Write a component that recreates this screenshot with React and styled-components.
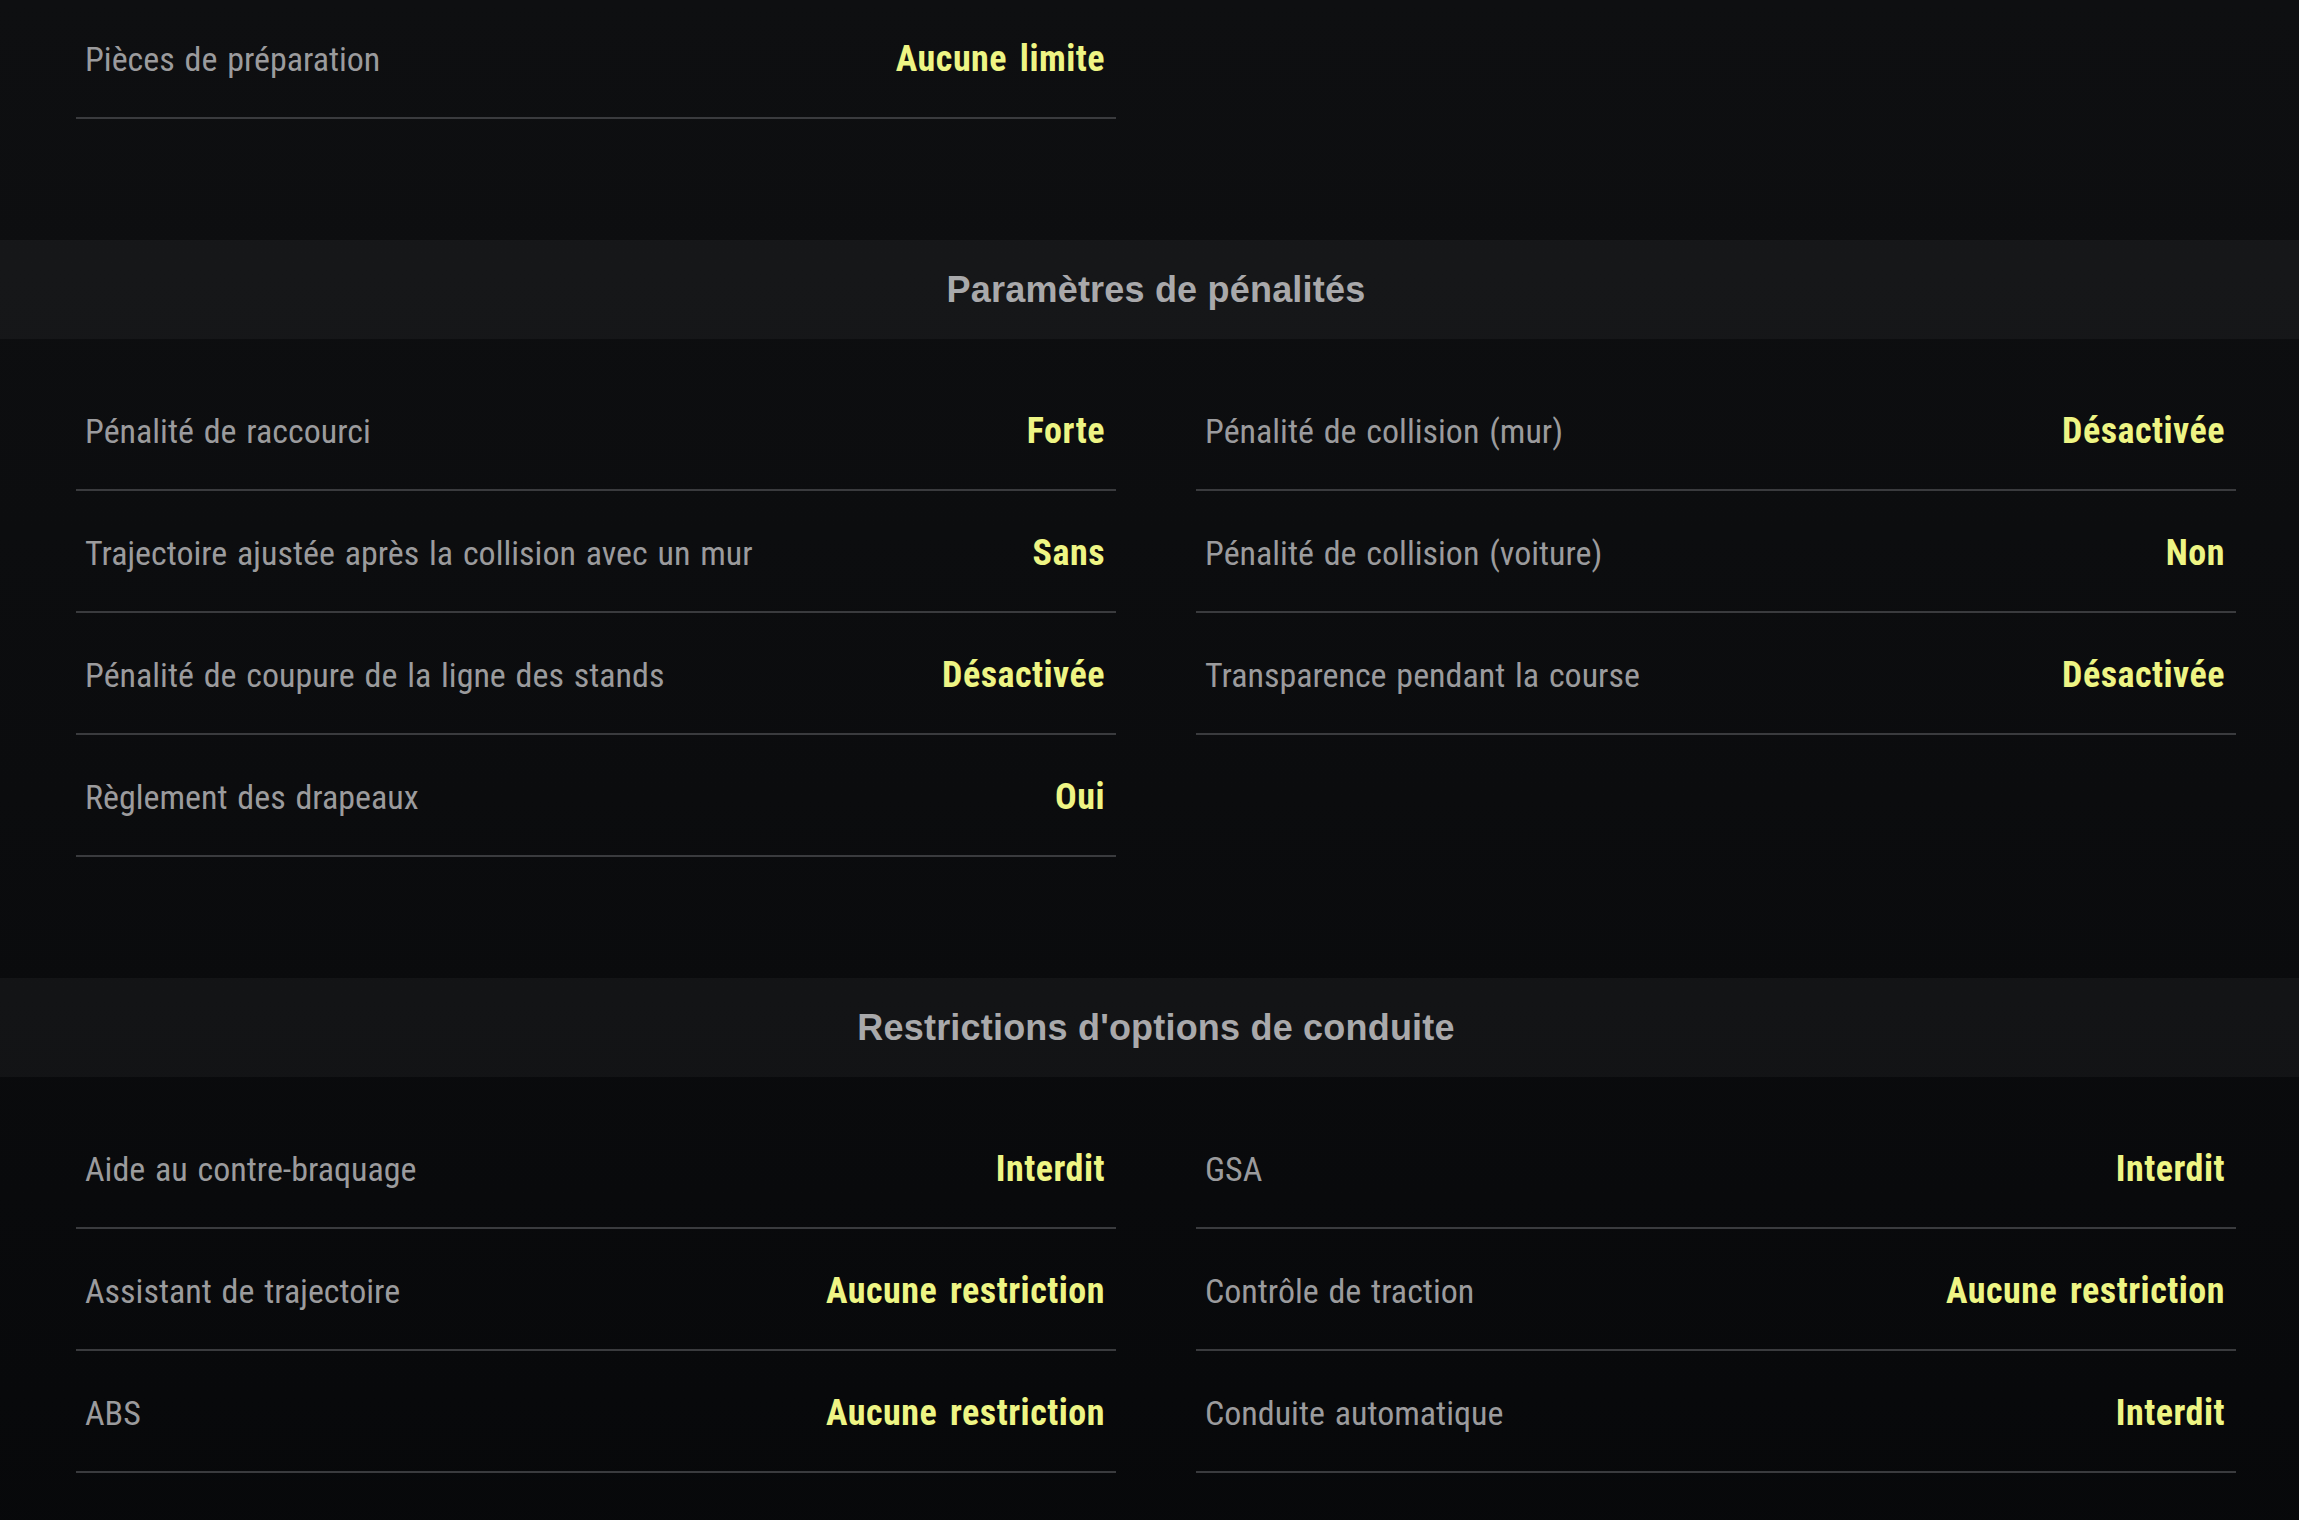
import React from 'react'
import styled, { createGlobalStyle } from 'styled-components'

const GlobalStyle = createGlobalStyle`
    html, body {
        margin: 0;
        padding: 0;
        background: #0b0c0e;
    }
    body {
        font-family: "Roboto Condensed", "Liberation Sans", sans-serif;
    }
`;

const Page = styled.div`
    min-height: 1520px;
    overflow: hidden;
    background: linear-gradient(180deg, #0e0f11 0%, #0b0c0e 50%, #07080a 100%);
`;

const Block = styled.section`
    margin-top: ${props => props.offset || 0}px;
`;

const SectionHeader = styled.div`
    height: 99px;
    display: flex;
    align-items: center;
    justify-content: center;
    padding: 0 63px 0 76px;
    background: rgba(255, 255, 255, 0.04);
    font-family: "Liberation Sans", Arial, sans-serif;
    font-weight: 700;
    font-size: 36px;
    letter-spacing: 0.2px;
    color: #a9a9ab;
`;

const Columns = styled.div`
    display: grid;
    grid-template-columns: 1040px 1040px;
    column-gap: 80px;
    padding: ${props => props.top}px 63px 121px 76px;
`;

const Column = styled.div`
    display: flex;
    flex-direction: column;
`;

const Row = styled.div`
    box-sizing: border-box;
    height: 122px;
    display: flex;
    align-items: center;
    justify-content: space-between;
    padding: 4px 11px 0 9px;
    border-bottom: 2px solid #3a3b3e;
`;

const Label = styled.span`
    font-family: "Roboto Condensed", "Liberation Sans", sans-serif;
    font-size: 34px;
    color: #9b9b9d;
    word-spacing: 2px;
`;

const Value = styled.span`
    font-family: "Roboto Condensed", "Liberation Sans", sans-serif;
    font-size: 36px;
    font-weight: 700;
    color: #eef584;
    letter-spacing: 0.5px;
    word-spacing: 4px;
`;

const sections = [
    {
        title: "Paramètres de pénalités",
        left: [
            ["Pénalité de raccourci", "Forte"],
            ["Trajectoire ajustée après la collision avec un mur", "Sans"],
            ["Pénalité de coupure de la ligne des stands", "Désactivée"],
            ["Règlement des drapeaux", "Oui"],
        ],
        right: [
            ["Pénalité de collision (mur)", "Désactivée"],
            ["Pénalité de collision (voiture)", "Non"],
            ["Transparence pendant la course", "Désactivée"],
        ],
    },
    {
        title: "Restrictions d'options de conduite",
        left: [
            ["Aide au contre-braquage", "Interdit"],
            ["Assistant de trajectoire", "Aucune restriction"],
            ["ABS", "Aucune restriction"],
        ],
        right: [
            ["GSA", "Interdit"],
            ["Contrôle de traction", "Aucune restriction"],
            ["Conduite automatique", "Interdit"],
        ],
    },
];

const SettingList = ({ items }) => (
    <Column>
        {items.map(([label, value]) => (
            <Row key={label}>
                <Label>{label}</Label>
                <Value>{value}</Value>
            </Row>
        ))}
    </Column>
);

export default function App() {
    return (
        <Page>
            <GlobalStyle />
            <Block offset={-3}>
                <Columns top={0}>
                    <SettingList items={[["Pièces de préparation", "Aucune limite"]]} />
                    <Column />
                </Columns>
            </Block>
            {sections.map(section => (
                <Block key={section.title}>
                    <SectionHeader>{section.title}</SectionHeader>
                    <Columns top={30}>
                        <SettingList items={section.left} />
                        <SettingList items={section.right} />
                    </Columns>
                </Block>
            ))}
        </Page>
    );
}
